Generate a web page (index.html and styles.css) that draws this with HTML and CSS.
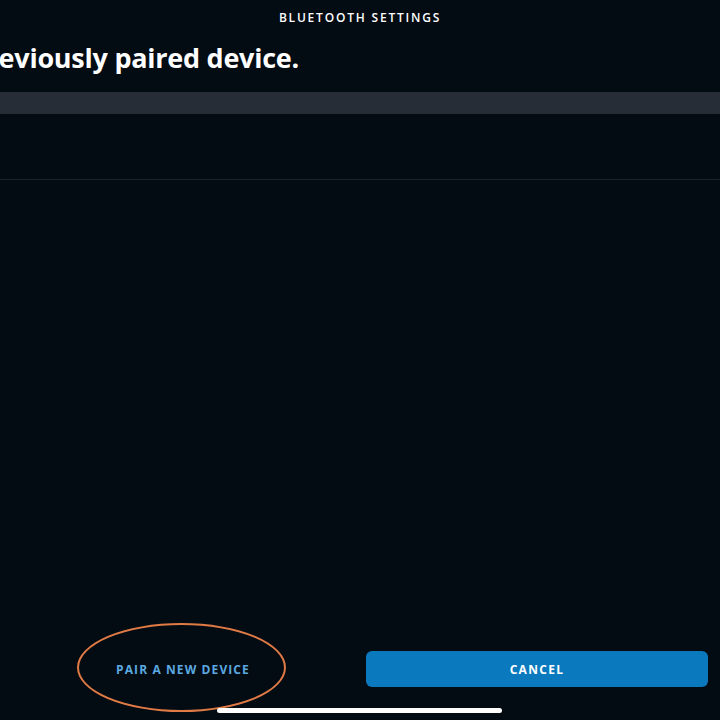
FILE: index.html
```html
<!DOCTYPE html>
<html lang="en">
<head>
  <meta charset="UTF-8">
  <meta name="viewport" content="width=device-width, initial-scale=1.0">
  <title>Bluetooth Settings</title>
  <link rel="stylesheet" href="styles.css">
</head>
<body>
  <div class="screen">
    <header class="top-bar">
      <span class="top-title">BLUETOOTH SETTINGS</span>
    </header>
    <div class="heading-row">
      <h1 class="heading">Select a previously paired device.</h1>
    </div>
    <div class="section-band"></div>
    <div class="device-row"></div>
    <div class="spacer"></div>
    <footer class="actions">
      <div class="action-slot">
        <button class="link-button">PAIR A NEW DEVICE</button>
        <span class="highlight-ring"></span>
      </div>
      <div class="action-slot">
        <button class="primary-button">CANCEL</button>
      </div>
    </footer>
    <div class="home-indicator"></div>
  </div>
</body>
</html>
```

FILE: styles.css
```css
* {
  box-sizing: border-box;
}
body {
  margin: 0;
  background-color: #030b13;
  font-family: "Open Sans", "Liberation Sans", sans-serif;
  color: #fff;
}
.screen {
  position: relative;
  height: 720px;
  display: flex;
  flex-direction: column;
  overflow: hidden;
}
.top-bar {
  padding-top: 5px;
  text-align: center;
}
.top-title {
  font-size: 12px;
  font-weight: 600;
  letter-spacing: 1.8px;
  margin-left: 0;
}
.heading-row {
  width: 299px;
  display: flex;
  justify-content: flex-end;
  margin-top: 14px;
}
.heading {
  margin: 0;
  flex-shrink: 0;
  white-space: nowrap;
  font-size: 27px;
  font-weight: 700;
  letter-spacing: -0.25px;
  line-height: 34px;
}
.section-band {
  margin-top: 17px;
  height: 22px;
  background-color: #262d36;
}
.device-row {
  height: 66px;
  border-bottom: 1px solid #1c232b;
}
.spacer {
  flex: 1;
}
.actions {
  display: flex;
  gap: 12px;
  padding: 0 12px 33px 12px;
}
.action-slot {
  position: relative;
  flex: 1;
  display: flex;
  justify-content: center;
}
.link-button,
.primary-button {
  border: none;
  font-family: inherit;
  font-size: 12px;
  font-weight: 700;
  letter-spacing: 1.3px;
  height: 36px;
  cursor: pointer;
}
.link-button {
  background: none;
  color: #5aa9e0;
  padding: 0 10px;
  letter-spacing: 1.1px;
}
.primary-button {
  width: 100%;
  background-color: #0a79bd;
  color: #fff;
  border-radius: 6px;
}
.highlight-ring {
  position: absolute;
  left: 65px;
  top: -28px;
  width: 209px;
  height: 89px;
  border: 2px solid #e07b45;
  border-radius: 50%;
  pointer-events: none;
}
.home-indicator {
  position: absolute;
  left: 217px;
  bottom: 7px;
  width: 285px;
  height: 5px;
  border-radius: 3px;
  background-color: #fff;
}
```
